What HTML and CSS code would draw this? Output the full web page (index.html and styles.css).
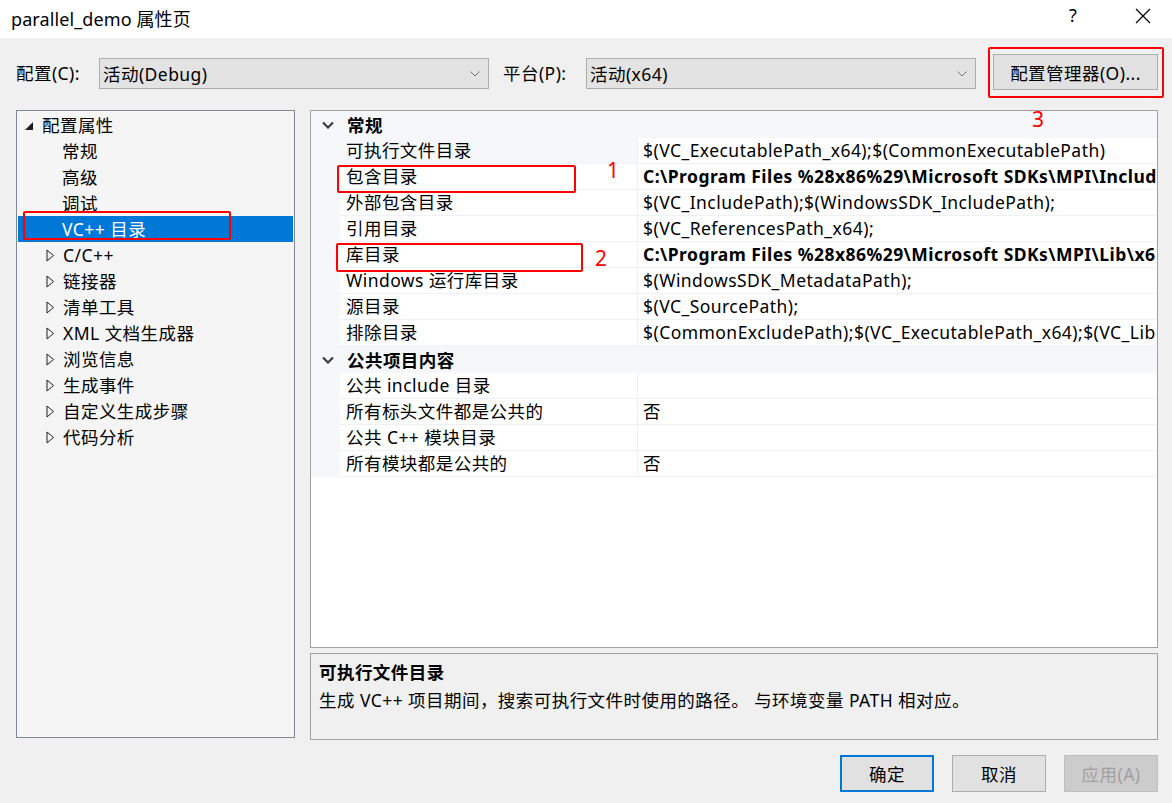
FILE: index.html
```html
<!DOCTYPE html>
<html lang="zh-CN">
  <head>
    <meta charset="UTF-8" />
    <title>parallel_demo 属性页</title>
    <link rel="stylesheet" href="styles.css">
  </head>
  <body>
    <div class="window">
      <div class="titlebar">
        <span class="title">parallel_demo 属性页</span>
        <span class="help">?</span>
        <span class="close">
          <svg width="16" height="16" viewBox="0 0 16 16"><path d="M1 1 L15 15 M15 1 L1 15" stroke="#000" stroke-width="1.2" fill="none"/></svg>
        </span>
      </div>

      <div class="toolbar">
        <span class="label">配置(C):</span>
        <div class="select">
          <span>活动(Debug)</span>
          <svg class="chev" width="10" height="6" viewBox="0 0 10 6"><path d="M0.5 0.5 L5 5 L9.5 0.5" stroke="#707070" stroke-width="1" fill="none"/></svg>
        </div>
        <span class="label">平台(P):</span>
        <div class="select">
          <span>活动(x64)</span>
          <svg class="chev" width="10" height="6" viewBox="0 0 10 6"><path d="M0.5 0.5 L5 5 L9.5 0.5" stroke="#707070" stroke-width="1" fill="none"/></svg>
        </div>
        <div class="manager-wrap">
          <button class="btn manager">配置管理器(O)...</button>
          <span class="mark-box box-manager"></span>
          <span class="mark-num num-3">3</span>
        </div>
      </div>

      <div class="main">
        <div class="tree">
          <div class="node root">
            <svg class="tri" width="9" height="9" viewBox="0 0 9 9"><polygon points="8,0 8,8 0,8" fill="#1e1e1e"/></svg>
            <span>配置属性</span>
          </div>
          <div class="node leaf">常规</div>
          <div class="node leaf">高级</div>
          <div class="node leaf">调试</div>
          <div class="node leaf selected">
            VC++ 目录
            <span class="mark-box box-vc"></span>
          </div>
          <div class="node branch"><svg class="tri-o" width="9" height="13" viewBox="0 0 9 13"><polygon points="1,1 7.5,6.5 1,12" fill="none" stroke="#1e1e1e" stroke-width="1"/></svg>C/C++</div>
          <div class="node branch"><svg class="tri-o" width="9" height="13" viewBox="0 0 9 13"><polygon points="1,1 7.5,6.5 1,12" fill="none" stroke="#1e1e1e" stroke-width="1"/></svg>链接器</div>
          <div class="node branch"><svg class="tri-o" width="9" height="13" viewBox="0 0 9 13"><polygon points="1,1 7.5,6.5 1,12" fill="none" stroke="#1e1e1e" stroke-width="1"/></svg>清单工具</div>
          <div class="node branch"><svg class="tri-o" width="9" height="13" viewBox="0 0 9 13"><polygon points="1,1 7.5,6.5 1,12" fill="none" stroke="#1e1e1e" stroke-width="1"/></svg>XML 文档生成器</div>
          <div class="node branch"><svg class="tri-o" width="9" height="13" viewBox="0 0 9 13"><polygon points="1,1 7.5,6.5 1,12" fill="none" stroke="#1e1e1e" stroke-width="1"/></svg>浏览信息</div>
          <div class="node branch"><svg class="tri-o" width="9" height="13" viewBox="0 0 9 13"><polygon points="1,1 7.5,6.5 1,12" fill="none" stroke="#1e1e1e" stroke-width="1"/></svg>生成事件</div>
          <div class="node branch"><svg class="tri-o" width="9" height="13" viewBox="0 0 9 13"><polygon points="1,1 7.5,6.5 1,12" fill="none" stroke="#1e1e1e" stroke-width="1"/></svg>自定义生成步骤</div>
          <div class="node branch"><svg class="tri-o" width="9" height="13" viewBox="0 0 9 13"><polygon points="1,1 7.5,6.5 1,12" fill="none" stroke="#1e1e1e" stroke-width="1"/></svg>代码分析</div>
        </div>

        <div class="right">
          <div class="grid">
            <div class="category">
              <svg class="cat-chev" width="12" height="8" viewBox="0 0 12 8"><path d="M1 1.5 L6 6.5 L11 1.5" stroke="#3c3c3c" stroke-width="2.2" fill="none"/></svg>
              <span>常规</span>
            </div>
            <div class="row current">
              <div class="gut"></div><div class="name">可执行文件目录</div><div class="value">$(VC_ExecutablePath_x64);$(CommonExecutablePath)</div>
            </div>
            <div class="row">
              <div class="gut"></div>
              <div class="name">包含目录<span class="mark-box box-inc"></span><span class="mark-num num-1">1</span></div>
              <div class="value bold">C:\Program Files %28x86%29\Microsoft SDKs\MPI\Includ</div>
            </div>
            <div class="row">
              <div class="gut"></div><div class="name">外部包含目录</div><div class="value">$(VC_IncludePath);$(WindowsSDK_IncludePath);</div>
            </div>
            <div class="row">
              <div class="gut"></div><div class="name">引用目录</div><div class="value">$(VC_ReferencesPath_x64);</div>
            </div>
            <div class="row">
              <div class="gut"></div>
              <div class="name">库目录<span class="mark-box box-lib"></span><span class="mark-num num-2">2</span></div>
              <div class="value bold">C:\Program Files %28x86%29\Microsoft SDKs\MPI\Lib\x6</div>
            </div>
            <div class="row">
              <div class="gut"></div><div class="name">Windows 运行库目录</div><div class="value">$(WindowsSDK_MetadataPath);</div>
            </div>
            <div class="row">
              <div class="gut"></div><div class="name">源目录</div><div class="value">$(VC_SourcePath);</div>
            </div>
            <div class="row">
              <div class="gut"></div><div class="name">排除目录</div><div class="value">$(CommonExcludePath);$(VC_ExecutablePath_x64);$(VC_Lib</div>
            </div>

            <div class="category">
              <svg class="cat-chev" width="12" height="8" viewBox="0 0 12 8"><path d="M1 1.5 L6 6.5 L11 1.5" stroke="#3c3c3c" stroke-width="2.2" fill="none"/></svg>
              <span>公共项目内容</span>
            </div>
            <div class="row">
              <div class="gut"></div><div class="name">公共 include 目录</div><div class="value"></div>
            </div>
            <div class="row">
              <div class="gut"></div><div class="name">所有标头文件都是公共的</div><div class="value">否</div>
            </div>
            <div class="row">
              <div class="gut"></div><div class="name">公共 C++ 模块目录</div><div class="value"></div>
            </div>
            <div class="row">
              <div class="gut"></div><div class="name">所有模块都是公共的</div><div class="value">否</div>
            </div>
          </div>

          <div class="desc">
            <div class="desc-title">可执行文件目录</div>
            <div class="desc-text">生成 VC++ 项目期间，搜索可执行文件时使用的路径。 与环境变量 PATH 相对应。</div>
          </div>
        </div>
      </div>

      <div class="footer">
        <button class="btn default">确定</button>
        <button class="btn">取消</button>
        <button class="btn" disabled>应用(A)</button>
      </div>
    </div>
  </body>
</html>
```

FILE: styles.css
```css
body {
  margin: 0;
  padding: 0;
  font-family: "Noto Sans", "Noto Sans CJK SC", sans-serif;
  font-size: 17.5px;
  letter-spacing: 0.45px;
  color: #000;
  background: #f0f0f0;
}

.window {
  width: 1172px;
  height: 803px;
  background: #f0f0f0;
  overflow: hidden;
}

/* title bar */
.titlebar {
  height: 38px;
  background: #fff;
  display: flex;
  align-items: center;
  padding-left: 11px;
}

.title {
  font-size: 18px;
  letter-spacing: 0.1px;
  flex: 1;
  margin-top: -3px;
}

.help {
  font-size: 18px;
  width: 66px;
  margin-top: -8px;
}

.close {
  width: 37px;
  display: flex;
  margin-top: -7px;
}

/* config row */
.toolbar {
  height: 72px;
  box-sizing: border-box;
  display: flex;
  align-items: flex-start;
  padding-left: 16px;
  padding-top: 20px;
}

.label {
  width: 83px;
  line-height: 31px;
}

.select {
  width: 390px;
  height: 31px;
  box-sizing: border-box;
  background: #e3e3e3;
  border: 1px solid #adadad;
  display: flex;
  align-items: center;
  padding-left: 3px;
  margin-right: 14px;
}

.select span {
  flex: 1;
}

.select .chev {
  margin-right: 8px;
}

.select + .label + .select {
  margin-right: 17px;
}

.manager-wrap {
  position: relative;
  margin-top: -4px;
}

.btn,
button {
  font-family: inherit;
  font-size: 17.5px;
  letter-spacing: inherit;
  background: #e1e1e1;
  border: 1px solid #adadad;
  color: #000;
  padding: 0;
  height: 37px;
  width: 94px;
  cursor: pointer;
}

.manager {
  width: 165px;
  height: 36px;
  display: block;
}

/* red annotations */
.mark-box {
  position: absolute;
  border: 2.5px solid #f00;
  border-radius: 2px;
  box-sizing: border-box;
}

.mark-num {
  position: absolute;
  color: #f00;
  font-size: 21px;
  line-height: 1;
}

.box-manager {
  left: -5px;
  top: -7px;
  width: 176px;
  height: 51px;
}

.num-3 {
  left: 39px;
  top: 55px;
}

.box-vc {
  left: 5px;
  top: -5px;
  width: 208px;
  height: 29px;
}

.box-inc {
  left: -3px;
  top: 1px;
  width: 239px;
  height: 28px;
}

.num-1 {
  left: 267px;
  top: -4px;
}

.box-lib {
  left: -4px;
  top: 1px;
  width: 247px;
  height: 29px;
}

.num-2 {
  left: 255px;
  top: 6px;
}

/* main area */
.main {
  display: flex;
  gap: 15px;
  padding-left: 16px;
  height: 630px;
}

.tree {
  width: 279px;
  height: 628px;
  box-sizing: border-box;
  background: #f5f5f5;
  border: 1px solid #828790;
  padding-top: 1px;
}

.node {
  position: relative;
  height: 26px;
  line-height: 26px;
  display: flex;
  align-items: center;
  white-space: nowrap;
}

.node.root {
  padding-left: 8px;
}

.node.root .tri {
  margin-right: 8px;
  margin-top: 2px;
}

.node.leaf {
  padding-left: 45px;
}

.node.branch {
  padding-left: 29px;
}

.tri-o {
  margin-right: 8px;
}

.node.selected {
  background: #0078d7;
  color: #fff;
  margin: 0 1px;
  padding-left: 44px;
}

.right {
  width: 848px;
  display: flex;
  flex-direction: column;
  gap: 5px;
}

/* property grid */
.grid {
  height: 538px;
  box-sizing: border-box;
  background: #fff;
  border: 1px solid #a0a0a0;
  overflow: hidden;
}

.category {
  height: 27px;
  background: #f5f7fb;
  display: flex;
  align-items: center;
  font-weight: bold;
}

.cat-chev {
  margin-left: 11px;
  margin-right: 13px;
}

.row {
  display: flex;
  height: 26px;
  line-height: 25px;
}

.gut {
  width: 29px;
  background: #f5f7fb;
  flex: none;
}

.name {
  position: relative;
  width: 298px;
  flex: none;
  padding-left: 6px;
  box-sizing: border-box;
  border-bottom: 1px solid #eef1f6;
  border-right: 1px solid #eef1f6;
  white-space: nowrap;
}

.row.current .name {
  background: #f5f7fb;
}

.value {
  flex: 1;
  padding-left: 5px;
  border-bottom: 1px solid #eef1f6;
  white-space: nowrap;
  overflow: hidden;
}

.value.bold {
  font-weight: bold;
}

/* description */
.desc {
  height: 87px;
  box-sizing: border-box;
  border: 1px solid #a0a0a0;
  background: #f0f0f0;
  padding: 4px 8px;
}

.desc-title {
  font-weight: bold;
  line-height: 28px;
}

.desc-text {
  line-height: 28px;
}

/* bottom buttons */
.footer {
  display: flex;
  justify-content: flex-end;
  gap: 18px;
  padding-right: 14px;
  padding-top: 15px;
}

.btn.default {
  border: 2px solid #0078d7;
}

button:disabled {
  background: #cccccc;
  border-color: #bfbfbf;
  color: #a0a0a0;
  cursor: default;
}
```
